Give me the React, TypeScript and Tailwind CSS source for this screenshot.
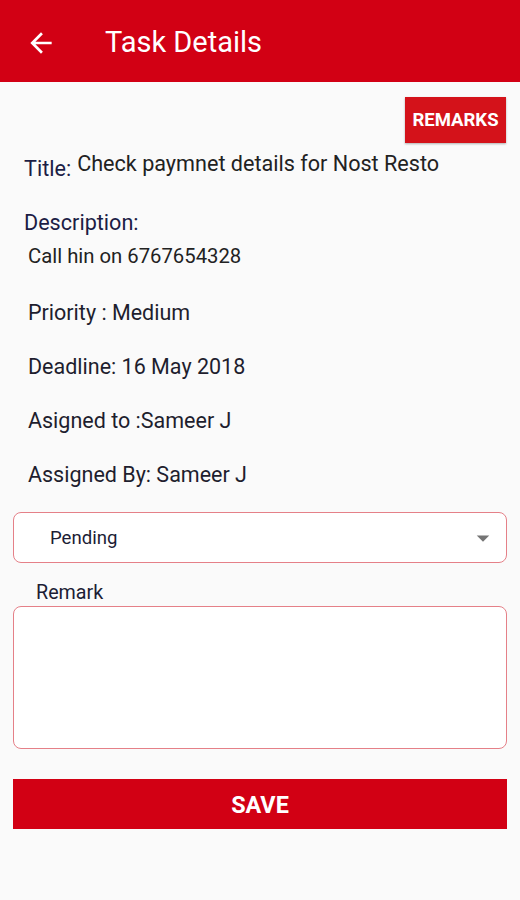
const rows = [
  { text: "Priority : Medium", mt: "mt-[31px]" },
  { text: "Deadline: 16 May 2018", mt: "mt-[28px]" },
  { text: "Asigned to :Sameer J", mt: "mt-[28px]" },
  { text: "Assigned By: Sameer J", mt: "mt-[28px]" },
];

export default function App() {
  return (
    <div className="min-h-[900px] bg-[#fafafa] font-['Roboto',sans-serif]">
      {/* App bar */}
      <header className="flex h-[82px] items-center bg-[#d20014] pt-[3px]">
        <button className="ml-[25px] flex h-8 w-8 items-center justify-center text-white">
          <svg viewBox="0 0 24 24" className="h-8 w-8" fill="currentColor">
            <path d="M20 11H7.83l5.59-5.59L12 4l-8 8 8 8 1.41-1.41L7.83 13H20v-2z" />
          </svg>
        </button>
        <h1 className="ml-[48px] text-[29px] leading-none text-white">Task Details</h1>
      </header>

      <main>
        <div className="flex justify-end pr-[14px] pt-[15px]">
          <button className="h-[46px] w-[101px] bg-[#d4121a] pt-[2px] text-[18.5px] font-bold text-white shadow-[0_1px_2px_rgba(0,0,0,0.3)]">
            REMARKS
          </button>
        </div>

        {/* Title */}
        <div className="mt-[8px] flex h-[31px] items-start pl-[24px] text-[21.6px] leading-[26px]">
          <span className="mt-[5px] text-[#1c1d45]">Title:</span>
          <span className="ml-[6px] text-[#222]">Check paymnet details for Nost Resto</span>
        </div>

        {/* Description */}
        <div className="mt-[28px] pl-[24px] text-[21.6px] leading-[26px] text-[#1c1d45]">Description:</div>
        <div className="mt-[7px] pl-[28px] text-[20.3px] leading-[26px] text-[#222]">Call hin on 6767654328</div>

        {rows.map((r) => (
          <div key={r.text} className={`${r.mt} pl-[28px] text-[21.5px] leading-[26px] text-[#1e1e2e]`}>
            {r.text}
          </div>
        ))}

        {/* Status select */}
        <div className="mx-[13px] mt-[24px] flex h-[51px] items-center justify-between rounded-[8px] border border-[#e58088] bg-white pl-[36px] pr-[8px]">
          <span className="mt-[2px] text-[18.6px] text-[#1c1d35]">Pending</span>
          <svg viewBox="0 0 24 24" className="h-[30px] w-[30px]" fill="#757575">
            <path d="M7 10l5 5 5-5z" />
          </svg>
        </div>

        <div className="mt-[18px] pl-[36px] text-[19.7px] leading-[24px] text-[#1c1d35]">Remark</div>
        <textarea className="mx-[13px] mt-[1px] block h-[143px] w-[494px] resize-none rounded-[8px] border border-[#e58088] bg-white outline-none" />

        <button className="mx-[13px] mt-[30px] block h-[50px] w-[494px] bg-[#d20014] pt-[3px] text-[23.4px] font-bold text-white">
          SAVE
        </button>
      </main>
    </div>
  );
}
